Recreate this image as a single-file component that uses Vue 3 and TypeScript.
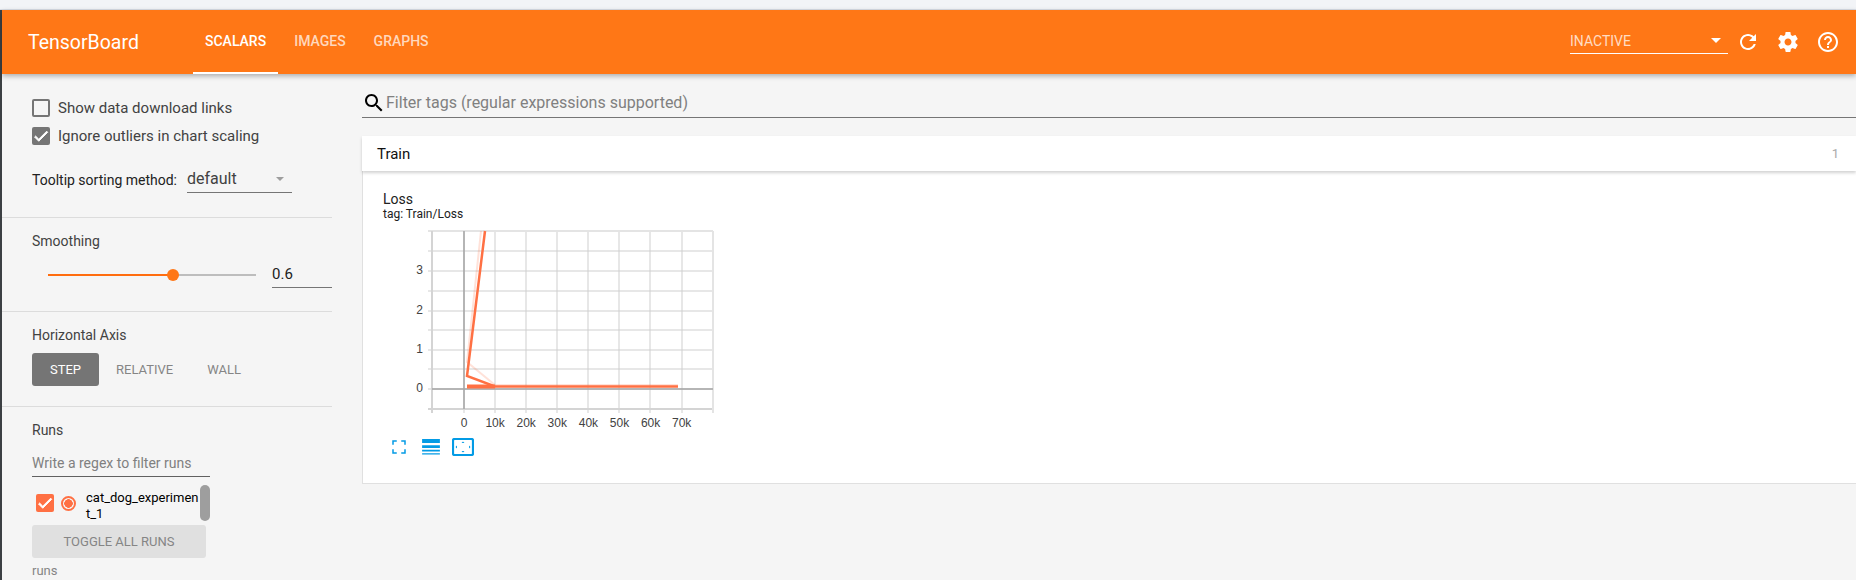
<template>
  <div class="page">
    <div class="top-strip"></div>
    <div class="body-row">
      <div class="app-col">
        <header class="toolbar">
          <div class="brand">TensorBoard</div>
          <nav class="tabs">
            <div v-for="tab in tabs" :key="tab" class="tab" :class="{ active: tab === 'SCALARS' }">{{ tab }}</div>
          </nav>
          <div class="spacer"></div>
          <div class="mode-select">
            <span>INACTIVE</span>
            <i class="caret white"></i>
          </div>
          <button class="icon-btn">
            <svg viewBox="0 0 24 24"><path d="M17.65 6.35C16.2 4.9 14.21 4 12 4c-4.42 0-7.99 3.58-7.99 8s3.57 8 7.99 8c3.73 0 6.84-2.55 7.73-6h-2.08c-.82 2.33-3.04 4-5.65 4-3.31 0-6-2.69-6-6s2.69-6 6-6c1.66 0 3.14.69 4.22 1.78L13 11h7V4l-2.35 2.35z" /></svg>
          </button>
          <button class="icon-btn">
            <svg viewBox="0 0 24 24"><path d="M19.43 12.98c.04-.32.07-.64.07-.98s-.03-.66-.07-.98l2.11-1.65c.19-.15.24-.42.12-.64l-2-3.46c-.12-.22-.39-.3-.61-.22l-2.49 1c-.52-.4-1.08-.73-1.69-.98l-.38-2.65C14.46 2.18 14.25 2 14 2h-4c-.25 0-.46.18-.49.42l-.38 2.65c-.61.25-1.17.59-1.69.98l-2.49-1c-.23-.09-.49 0-.61.22l-2 3.46c-.13.22-.07.49.12.64l2.11 1.65c-.04.32-.07.65-.07.98s.03.66.07.98l-2.11 1.65c-.19.15-.24.42-.12.64l2 3.46c.12.22.39.3.61.22l2.49-1c.52.4 1.08.73 1.69.98l.38 2.65c.03.24.24.42.49.42h4c.25 0 .46-.18.49-.42l.38-2.65c.61-.25 1.17-.59 1.69-.98l2.49 1c.23.09.49 0 .61-.22l2-3.46c.12-.22.07-.49-.12-.64l-2.11-1.65zM12 15.5c-1.93 0-3.5-1.57-3.5-3.5s1.57-3.5 3.5-3.5 3.5 1.57 3.5 3.5-1.57 3.5-3.5 3.5z" /></svg>
          </button>
          <button class="icon-btn">
            <svg viewBox="0 0 24 24"><path d="M11 18h2v-2h-2v2zm1-16C6.48 2 2 6.48 2 12s4.48 10 10 10 10-4.48 10-10S17.52 2 12 2zm0 18c-4.41 0-8-3.59-8-8s3.59-8 8-8 8 3.59 8 8-3.59 8-8 8zm0-14c-2.21 0-4 1.79-4 4h2c0-1.1.9-2 2-2s2 .9 2 2c0 2-3 1.75-3 5h2c0-2.25 3-2.5 3-5 0-2.21-1.79-4-4-4z" /></svg>
          </button>
        </header>

        <div class="content">
          <aside class="sidebar">
            <section class="side-section options">
              <label class="check-row">
                <span class="box"></span>
                <span>Show data download links</span>
              </label>
              <label class="check-row">
                <span class="box checked">
                  <svg viewBox="0 0 24 24"><path d="M9 16.17L4.83 12l-1.42 1.41L9 19 21 7l-1.41-1.41z" /></svg>
                </span>
                <span>Ignore outliers in chart scaling</span>
              </label>
              <div class="sort-row">
                <span class="sort-label">Tooltip sorting method:</span>
                <div class="sort-select">
                  <span>default</span>
                  <i class="caret gray"></i>
                </div>
              </div>
            </section>

            <section class="side-section smoothing">
              <div class="section-title">Smoothing</div>
              <div class="slider-row">
                <div class="slider">
                  <div class="slider-fill" :style="{ width: smoothing * 100 + '%' }"></div>
                  <div class="slider-rest"></div>
                  <div class="slider-knob"></div>
                </div>
                <div class="slider-value">{{ smoothing }}</div>
              </div>
            </section>

            <section class="side-section axis">
              <div class="section-title">Horizontal Axis</div>
              <div class="axis-buttons">
                <div v-for="a in axes" :key="a" class="axis-btn" :class="{ selected: a === 'STEP' }">{{ a }}</div>
              </div>
            </section>

            <section class="side-section runs">
              <div class="section-title">Runs</div>
              <div class="regex">Write a regex to filter runs</div>
              <div class="run-list">
                <span class="run-check">
                  <svg viewBox="0 0 24 24"><path d="M9 16.17L4.83 12l-1.42 1.41L9 19 21 7l-1.41-1.41z" /></svg>
                </span>
                <span class="run-radio"></span>
                <span class="run-name">cat_dog_experiment_1</span>
                <span class="run-scroll"></span>
              </div>
              <div class="toggle-btn">TOGGLE ALL RUNS</div>
              <div class="runs-foot">runs</div>
            </section>
          </aside>

          <main class="main">
            <div class="filter">
              <svg class="search" viewBox="0 0 24 24"><path d="M15.5 14h-.79l-.28-.27C15.41 12.59 16 11.11 16 9.5 16 5.91 13.09 3 9.5 3S3 5.91 3 9.5 5.91 16 9.5 16c1.61 0 3.09-.59 4.23-1.57l.27.28v.79l5 4.99L20.49 19l-4.99-5zm-6 0C7.01 14 5 11.99 5 9.5S7.01 5 9.5 5 14 7.01 14 9.5 11.99 14 9.5 14z" /></svg>
              <span>Filter tags (regular expressions supported)</span>
            </div>

            <div class="category">
              <div class="category-head">
                <span>Train</span>
                <span class="category-count">1</span>
              </div>
              <div class="category-body">
                <div class="chart-title">Loss</div>
                <div class="chart-tag">tag: Train/Loss</div>
                <svg class="chart" width="330" height="202" viewBox="0 0 330 202">
                  <line v-for="y in yGrid" :key="'y' + y" x1="46" x2="331" :y1="y" :y2="y" class="grid" />
                  <line v-for="x in xGrid" :key="'x' + x" :x1="x" :x2="x" y1="5" y2="187" class="grid" />
                  <line x1="46" x2="331" y1="5" y2="5" class="frame-light" />
                  <line x1="46" x2="331" y1="183" y2="183" class="frame" />
                  <line x1="50" x2="50" y1="5" y2="187" class="frame" />
                  <line x1="331" x2="331" y1="5" y2="187" class="frame-light" />
                  <line x1="50" x2="331" y1="163" y2="163" class="axis-line" />
                  <line x1="82" x2="82" y1="5" y2="183" class="axis-line" />
                  <polyline points="99,5 85,136 113,159 296,159" class="raw" />
                  <polyline points="103,5 85,150 113,160.500 296,160.500" class="smooth" />
                  <line x1="85" x2="113" y1="160.500" y2="160.500" class="thick" />
                  <text v-for="t in yTicks" :key="t.label" x="41" :y="t.y + 3" class="tick end">{{ t.label }}</text>
                  <text v-for="t in xTicks" :key="t.label" :x="t.x" y="201" class="tick mid">{{ t.label }}</text>
                </svg>
                <div class="chart-actions">
                  <svg class="act first" viewBox="0 0 24 24"><path d="M5 9H3V3h6v2H5zM15 3h6v6h-2V5h-4zM3 15h2v4h4v2H3zM19 15h2v6h-6v-2h4z" /></svg>
                  <svg class="act list" viewBox="0 0 20 18"><path d="M0 0h20v4.500H0zM0 7h20v3H0zM0 12h20v2H0zM0 16h20v1.500H0z" /></svg>
                  <svg class="act fit" viewBox="0 0 22 18">
                    <rect x="1" y="1" width="20" height="16" rx="1.500" fill="none" stroke="currentColor" stroke-width="2.2" />
                    <path d="M11 3.500l1.500 1.500h-3zM11 14.500l-1.500-1.500h3zM3.500 9l1.500-1.500v3zM18.500 9l-1.500 1.500v-3z" />
                  </svg>
                </div>
              </div>
            </div>
          </main>
        </div>
      </div>
    </div>
  </div>
</template>

<script setup lang="ts">
const tabs = ['SCALARS', 'IMAGES', 'GRAPHS']
const axes = ['STEP', 'RELATIVE', 'WALL']
const smoothing = 0.6

// chart grid, in svg coordinates
const yGrid = [25, 45, 65, 85, 104, 124, 143, 163]
const xGrid = [82, 113, 144, 175, 206, 237, 268, 300]
const yTicks = [
  { label: '3', y: 45 },
  { label: '2', y: 85 },
  { label: '1', y: 124 },
  { label: '0', y: 163 }
]
const xTicks = ['0', '10k', '20k', '30k', '40k', '50k', '60k', '70k'].map((label, i) => ({
  label,
  x: 82 + i * 31.1
}))
</script>

<style scoped>
.page {
  height: 580px;
  overflow: hidden;
  background: #f5f5f5;
  font-family: Roboto, "Noto Sans", sans-serif;
  display: flex;
  flex-direction: column;
}

.top-strip {
  height: 9px;
  flex: none;
  background: #f2f4f7;
  border-bottom: 1px solid #d9dee6;
}

.body-row {
  flex: 1;
  display: flex;
  min-height: 0;
  border-left: 2px solid #3c4043;
}

.app-col {
  flex: 1;
  min-width: 0;
  display: flex;
  flex-direction: column;
}

.toolbar {
  height: 64px;
  flex: none;
  background: #ff7716;
  color: #fff;
  display: flex;
  align-items: center;
  padding-left: 26px;
  box-shadow: 0 2px 5px rgba(0, 0, 0, 0.3);
  position: relative;
  z-index: 2;
}

.brand {
  font-size: 19.5px;
  width: 165px;
}

.tabs {
  display: flex;
  gap: 4px;
  height: 64px;
}

.tab {
  display: flex;
  align-items: center;
  padding: 0 12px;
  font-size: 14px;
  font-weight: 500;
  color: rgba(255, 255, 255, 0.72);
  border-bottom: 2px solid transparent;
  box-sizing: border-box;
}

.tab.active {
  color: #fff;
  border-bottom-color: #fff;
}

.spacer {
  flex: 1;
}

.mode-select {
  width: 158px;
  height: 30px;
  margin-top: -6px;
  padding: 4px 7px 0 0;
  box-sizing: border-box;
  border-bottom: 1px solid #fff;
  display: flex;
  align-items: center;
  justify-content: space-between;
  font-size: 14px;
  color: rgba(255, 255, 255, 0.75);
}

.caret {
  display: block;
  width: 0;
  height: 0;
  border-left: 4px solid transparent;
  border-right: 4px solid transparent;
}

.caret.white {
  border-left-width: 5px;
  border-right-width: 5px;
  border-top: 5px solid #fff;
}

.caret.gray {
  border-top: 4px solid #9e9e9e;
}

.icon-btn {
  width: 40px;
  height: 40px;
  padding: 8px;
  border: 0;
  background: none;
  color: #fff;
  flex: none;
}

.icon-btn svg {
  display: block;
  width: 24px;
  height: 24px;
  fill: currentColor;
}

.icon-btn:last-child {
  margin-right: 8px;
}

.content {
  flex: 1;
  min-height: 0;
  display: flex;
}

.sidebar {
  width: 330px;
  flex: none;
  color: #424242;
  font-size: 14px;
}

.side-section {
  border-bottom: 1px solid #dcdcdc;
  padding-left: 30px;
  box-sizing: border-box;
}

.options {
  height: 144px;
  padding-top: 25px;
}

.check-row {
  display: flex;
  align-items: center;
  height: 18px;
  gap: 8px;
  margin-bottom: 10px;
  font-size: 15px;
}

.box {
  width: 18px;
  height: 18px;
  box-sizing: border-box;
  border: 2px solid #757575;
  border-radius: 2px;
  flex: none;
}

.box.checked {
  background: #757575;
  border: 0;
  display: flex;
}

.box svg,
.run-check svg {
  display: block;
  width: 18px;
  height: 18px;
  fill: #fff;
  stroke: #fff;
  stroke-width: 1.2;
}

.sort-row {
  display: flex;
  margin-top: 18px;
  height: 30px;
}

.sort-label {
  color: #212121;
  font-size: 14px;
  width: 155px;
  padding-top: 9px;
}

.sort-select {
  width: 105px;
  height: 30px;
  padding: 2px 8px 0 0;
  box-sizing: border-box;
  border-bottom: 1px solid #757575;
  display: flex;
  align-items: center;
  justify-content: space-between;
  font-size: 16px;
  color: #424242;
}

.smoothing {
  height: 94px;
  padding-top: 14px;
}

.section-title {
  font-size: 14px;
  line-height: 18px;
}

.slider-row {
  display: flex;
  align-items: center;
  margin-top: 8px;
  height: 30px;
}

.slider {
  position: relative;
  margin-left: 16px;
  margin-top: 4px;
  width: 208px;
  height: 2px;
  display: flex;
}

.slider-fill {
  background: #ff6d0f;
}

.slider-rest {
  flex: 1;
  background: #bdbdbd;
}

.slider-knob {
  position: absolute;
  left: 119px;
  top: -5px;
  width: 12px;
  height: 12px;
  border-radius: 50%;
  background: #ff7716;
}

.slider-value {
  margin-left: 16px;
  width: 60px;
  height: 30px;
  line-height: 32px;
  box-sizing: border-box;
  border-bottom: 1px solid #757575;
  font-size: 15px;
  color: #212121;
}

.axis {
  height: 95px;
  padding-top: 14px;
}

.axis-buttons {
  display: flex;
  margin-top: 9px;
}

.axis-btn {
  height: 33px;
  line-height: 33px;
  font-size: 13px;
  color: #858585;
  padding-right: 34px;
}

.axis-btn.selected {
  width: 67px;
  padding: 0;
  margin-right: 17px;
  text-align: center;
  background: #757575;
  color: #fff;
  border-radius: 3px;
}

.runs {
  border-bottom: 0;
  padding-top: 14px;
}

.regex {
  width: 178px;
  height: 30px;
  margin-top: 8px;
  padding-top: 2px;
  line-height: 28px;
  box-sizing: border-box;
  border-bottom: 1px solid #616161;
  color: #808080;
  font-size: 14px;
}

.run-list {
  display: flex;
  align-items: center;
  width: 178px;
  height: 36px;
  margin-top: 8px;
  position: relative;
  color: #000;
}

.run-check {
  width: 18px;
  height: 18px;
  margin-left: 4px;
  background: #ff7043;
  border-radius: 2px;
  flex: none;
}

.run-radio {
  width: 15px;
  height: 15px;
  margin-left: 7px;
  box-sizing: border-box;
  border: 2px solid #ff7043;
  border-radius: 50%;
  flex: none;
  background: radial-gradient(circle, #ff7043 0, #ff7043 4px, transparent 4.5px);
}

.run-name {
  margin-left: 10px;
  margin-top: 6px;
  width: 113px;
  font-size: 13px;
  line-height: 16px;
  word-break: break-all;
}

.run-scroll {
  position: absolute;
  right: 0;
  top: 0;
  width: 10px;
  height: 36px;
  border-radius: 5px;
  background: #9e9e9e;
}

.toggle-btn {
  width: 174px;
  height: 33px;
  margin-top: 4px;
  line-height: 33px;
  text-align: center;
  background: #e0e0e0;
  border-radius: 3px;
  color: #858585;
  font-size: 13px;
}

.runs-foot {
  margin-top: 4px;
  line-height: 18px;
  font-size: 13px;
  color: #858585;
}

.main {
  flex: 1;
  min-width: 0;
  padding-left: 30px;
}

.filter {
  height: 28px;
  margin-top: 16px;
  box-sizing: border-box;
  border-bottom: 1px solid #757575;
  display: flex;
  align-items: center;
  padding-bottom: 2px;
  color: #808080;
  font-size: 16px;
}

.search {
  width: 24px;
  height: 24px;
  fill: #000;
}

.category {
  margin-top: 18px;
}

.category-head {
  height: 35px;
  display: flex;
  align-items: center;
  justify-content: space-between;
  padding: 0 17px 0 15px;
  background: #fff;
  color: #111;
  font-size: 15px;
  box-shadow: 0 2px 3px rgba(0, 0, 0, 0.18);
  position: relative;
}

.category-count {
  font-size: 13px;
  color: #aaa;
}

.category-body {
  height: 313px;
  box-sizing: border-box;
  background: #fff;
  border-left: 1px solid #e0e0e0;
  border-bottom: 1px solid #e0e0e0;
  padding: 20px 0 0 20px;
}

.chart-title {
  font-size: 14px;
  line-height: 16px;
  color: #212121;
}

.chart-tag {
  font-size: 12px;
  line-height: 14px;
  color: #212121;
}

.chart {
  display: block;
  margin-left: -1px;
  margin-top: 5px;
  overflow: visible;
}

.grid {
  stroke: #cfcfcf;
  stroke-width: 1;
}

.frame {
  stroke: #d4d4d4;
  stroke-width: 2;
}

.frame-light {
  stroke: #e4e4e4;
  stroke-width: 2;
}

.axis-line {
  stroke: #a5a5a5;
  stroke-width: 1.5;
}

.raw {
  fill: none;
  stroke: #ff7043;
  stroke-opacity: 0.2;
  stroke-width: 2;
}

.smooth {
  fill: none;
  stroke: #ff7043;
  stroke-width: 2.5;
}

.thick {
  stroke: #ff7043;
  stroke-width: 4;
}

.tick {
  font-size: 12px;
  fill: #424242;
  font-family: "Liberation Sans", Arial, sans-serif;
}

.end {
  text-anchor: end;
}

.mid {
  text-anchor: middle;
}

.chart-actions {
  display: flex;
  align-items: center;
  margin-top: 10px;
  margin-left: 7px;
  color: #039be5;
}

.act {
  fill: currentColor;
  display: block;
}

.first {
  width: 18px;
  height: 18px;
}

.list {
  width: 18px;
  height: 16px;
  margin-left: 14px;
}

.fit {
  width: 22px;
  height: 18px;
  margin-left: 12px;
}
</style>
